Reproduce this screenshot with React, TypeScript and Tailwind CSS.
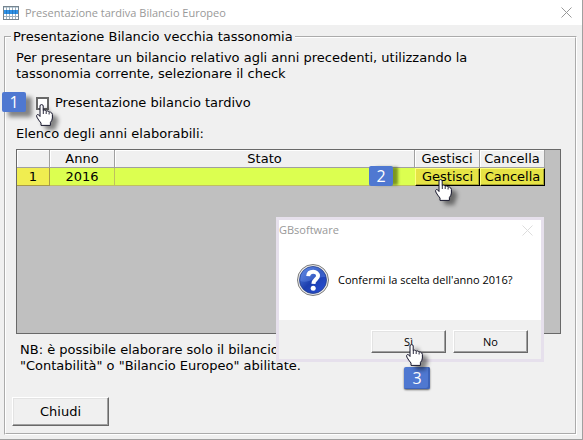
import { useState } from "react";

type YearRow = {
  id: number;
  year: number;
  status: string;
};

const ROWS: YearRow[] = [{ id: 1, year: 2016, status: "" }];

const raised =
  "border border-t-white border-l-white border-r-[#696969] border-b-[#696969] bg-[#f0f0f0] shadow-[inset_-1px_-1px_0_#a0a0a0,inset_1px_1px_0_#e3e3e3]";

const cellButton =
  "block h-[18px] w-full border border-t-[#ffff80] border-l-[#ffff80] border-r-black border-b-black bg-[#e6e345] text-center leading-4 shadow-[inset_-1px_-1px_0_#a8a430]";

const headCell =
  "h-[18px] border-r border-b border-[#a0a0a0] bg-[#f0f0f0] p-0 text-center font-normal leading-4 shadow-[inset_1px_1px_0_#ffffff]";

function WindowIcon() {
  return (
    <svg width="16" height="14" viewBox="0 0 16 14" aria-hidden="true">
      <rect width="16" height="14" fill="#76848e" />
      <rect x="1" y="1" width="14" height="12" fill="#ffffff" />
      <rect x="1" y="1" width="14" height="1" fill="#c3d3de" />
      <rect x="1" y="4" width="14" height="4" fill="#2f92e6" />
      <path d="M1 10.5H15M3.5 1V13M6.5 1V13M9.5 1V13M12.5 1V13" stroke="#9fb2bf" />
      <path d="M3.5 4V8M6.5 4V8M9.5 4V8M12.5 4V8" stroke="#2478c4" />
    </svg>
  );
}

function CloseIcon({ className }: { className: string }) {
  return (
    <svg width="11" height="11" viewBox="0 0 11 11" className={className} aria-hidden="true">
      <path d="M.5 .5L10.5 10.5M10.5 .5L.5 10.5" stroke="currentColor" fill="none" />
    </svg>
  );
}

function QuestionIcon() {
  return (
    <svg width="32" height="32" viewBox="0 0 32 32" aria-hidden="true">
      <defs>
        <linearGradient id="ball" x1="0" y1="0" x2="1" y2="1">
          <stop offset="0" stopColor="#5f8be6" />
          <stop offset="0.5" stopColor="#1c3fae" />
          <stop offset="1" stopColor="#2a50d8" />
        </linearGradient>
      </defs>
      <circle cx="16" cy="16" r="15.5" fill="#e8e8e8" stroke="#7c7c7c" />
      <circle cx="16" cy="16" r="13.5" fill="url(#ball)" stroke="#243f8c" strokeWidth="0.8" />
      <path d="M3.5 17C3 8 9 3 16 3C23 3 28 8 28.5 13C20 12 11 20 3.5 17Z" fill="#6d95ee" opacity="0.35" />
      <path
        d="M11.2 12.2C11.4 9 13.6 7.8 16.2 7.8C19 7.8 21 9.4 21 12C21 15.2 16.6 15.6 16.4 19.8"
        stroke="#ffffff"
        strokeWidth="4"
        fill="none"
      />
      <circle cx="16.2" cy="24.2" r="2.5" fill="#ffffff" />
    </svg>
  );
}

function HandCursor({ className }: { className: string }) {
  return (
    <svg
      width="17"
      height="22"
      viewBox="0 0 17 22"
      className={`pointer-events-none absolute drop-shadow-[5px_4px_2px_rgba(0,0,0,0.45)] ${className}`}
      aria-hidden="true"
    >
      <path
        d="M4 12.5V2Q4 .6 5.5 .6Q7.2 .6 7.2 2V6.8Q7.6 5.9 8.7 6.1Q9.9 6.3 10.1 7.4Q10.6 6.7 11.7 7Q12.8 7.3 13 8.3Q13.5 7.8 14.4 8.1Q16.2 8.7 16.4 10.5V14Q16.2 16.5 14.4 18.5V21.4H5V19Q2.4 16 .8 13Q.2 11 1.4 10.5Q2.6 10.1 4 12.5Z"
        fill="#ffffff"
        stroke="#15152b"
        strokeWidth="1"
        strokeLinejoin="round"
      />
      <path d="M7.3 7V10M10.2 7.6V10M13.1 8.6V10.5" stroke="#15152b" strokeWidth="0.9" />
    </svg>
  );
}

function StepBadge({ step, className }: { step: number; className: string }) {
  return (
    <span
      className={`absolute flex items-center justify-center rounded-xs bg-[#4f78d1] font-['Open_Sans',sans-serif] text-base text-white ${className}`}
    >
      {step}
    </span>
  );
}

function ConfirmDialog({ onClose }: { onClose: () => void }) {
  return (
    <div
      role="dialog"
      aria-labelledby="confirm-title"
      className="absolute top-[217px] left-[276px] w-[268px] border-3 border-[#e6e0ec] bg-white font-['Open_Sans',sans-serif] text-[11px]"
    >
      <div className="flex h-5 items-center justify-between pr-2">
        <h2 id="confirm-title" className="text-[#999999]">
          GBsoftware
        </h2>
        <button type="button" aria-label="Chiudi messaggio" onClick={onClose}>
          <CloseIcon className="text-[#dddddd]" />
        </button>
      </div>
      <div className="flex h-20 items-center gap-[9px] px-[18px]">
        <QuestionIcon />
        <p className="whitespace-nowrap">Confermi la scelta dell'anno 2016?</p>
      </div>
      <div className="flex justify-end gap-[7px] bg-[#f0f0f0] pt-[10px] pr-[13px] pb-[6px]">
        <button type="button" onClick={onClose} className={`h-[23px] w-[75px] ${raised}`}>
          Sì
        </button>
        <button type="button" onClick={onClose} className={`h-[23px] w-[75px] ${raised}`}>
          No
        </button>
      </div>
    </div>
  );
}

export default function App() {
  const [late, setLate] = useState(false);
  const [confirmOpen, setConfirmOpen] = useState(true);

  return (
    <div className="relative flex min-h-screen flex-col border-r border-b border-[#a0a0a0] bg-[#f0f0f0] font-['DejaVu_Sans',sans-serif] text-[13px] leading-4 text-black">
      <header className="flex h-[25px] items-center gap-[6px] bg-white pr-[10px] pl-[3px]">
        <WindowIcon />
        <h1 className="flex-1 font-['Open_Sans',sans-serif] text-[11px] text-[#999999]">
          Presentazione tardiva Bilancio Europeo
        </h1>
        <button type="button" aria-label="Chiudi finestra">
          <CloseIcon className="text-[#999999]" />
        </button>
      </header>

      <main className="flex flex-1 flex-col pt-1 pr-[5px] pb-1 pl-1">
        <fieldset className="flex flex-1 flex-col border-2 border-white pr-[14px] pb-[6px] pl-[10px] [border-style:groove]">
          <legend className="-ml-[5px] px-[2px]">Presentazione Bilancio vecchia tassonomia</legend>

          <p className="pt-[5px]">
            Per presentare un bilancio relativo agli anni precedenti, utilizzando la
            <br />
            tassonomia corrente, selezionare il check
          </p>

          <div className="mt-[13px] flex items-center gap-[6px] pl-5">
            <input
              id="late"
              type="checkbox"
              checked={late}
              onChange={(event) => setLate(event.target.checked)}
              className="size-[13px] appearance-none border-2 border-[#696969] bg-white checked:bg-[#4f78d1]"
            />
            <label htmlFor="late">Presentazione bilancio tardivo</label>
          </div>

          <p className="mt-[15px]">Elenco degli anni elaborabili:</p>

          <div className="mt-[7px] min-h-[185px] flex-1 border border-[#696969] bg-[#c0c0c0] pr-[15px]">
            <table className="w-full table-fixed border-separate border-spacing-0">
              <colgroup>
                <col className="w-[33px]" />
                <col className="w-[65px]" />
                <col />
                <col className="w-[65px]" />
                <col className="w-[65px]" />
              </colgroup>
              <thead>
                <tr>
                  <th className={headCell}></th>
                  <th className={headCell}>Anno</th>
                  <th className={headCell}>Stato</th>
                  <th className={headCell}>Gestisci</th>
                  <th className={headCell}>Cancella</th>
                </tr>
              </thead>
              <tbody>
                {ROWS.map((row) => (
                  <tr key={row.id} className="text-center leading-4">
                    <td className="border-r border-b border-[#a89a48] bg-[#f0ed50] p-0">{row.id}</td>
                    <td className="border-r border-b border-[#c0c060] bg-[#dcff50] p-0">{row.year}</td>
                    <td className="border-b border-[#c0c060] bg-[#dcff50] p-0">{row.status}</td>
                    <td className="p-0">
                      <button type="button" className={cellButton} onClick={() => setConfirmOpen(true)}>
                        Gestisci
                      </button>
                    </td>
                    <td className="p-0">
                      <button type="button" className={cellButton}>
                        Cancella
                      </button>
                    </td>
                  </tr>
                ))}
              </tbody>
            </table>
          </div>

          <p className="mt-2 pl-1">
            NB: è possibile elaborare solo il bilancio
            <br />
            "Contabilità" o "Bilancio Europeo" abilitate.
          </p>

          <button type="button" className={`mt-[23px] -ml-1 h-[29px] w-[97px] ${raised}`}>
            Chiudi
          </button>
        </fieldset>
      </main>

      {confirmOpen && <ConfirmDialog onClose={() => setConfirmOpen(false)} />}

      <StepBadge step={1} className="top-[92px] left-[2px] h-5 w-6 shadow-[6px_5px_4px_rgba(0,0,0,0.45)]" />
      <StepBadge step={2} className="top-[166px] left-[369px] h-5 w-6 shadow-[6px_0_3px_-1px_rgba(60,80,0,0.6)]" />
      <StepBadge step={3} className="top-[367px] left-[404px] h-[22px] w-[26px] shadow-[0_1px_2px_rgba(0,0,0,0.6),inset_-2px_-1px_0_#3d63b8]" />
      <HandCursor className="top-[104px] left-[36px]" />
      <HandCursor className="top-[179px] left-[435px]" />
      <HandCursor className="top-[344px] left-[406px]" />
    </div>
  );
}
